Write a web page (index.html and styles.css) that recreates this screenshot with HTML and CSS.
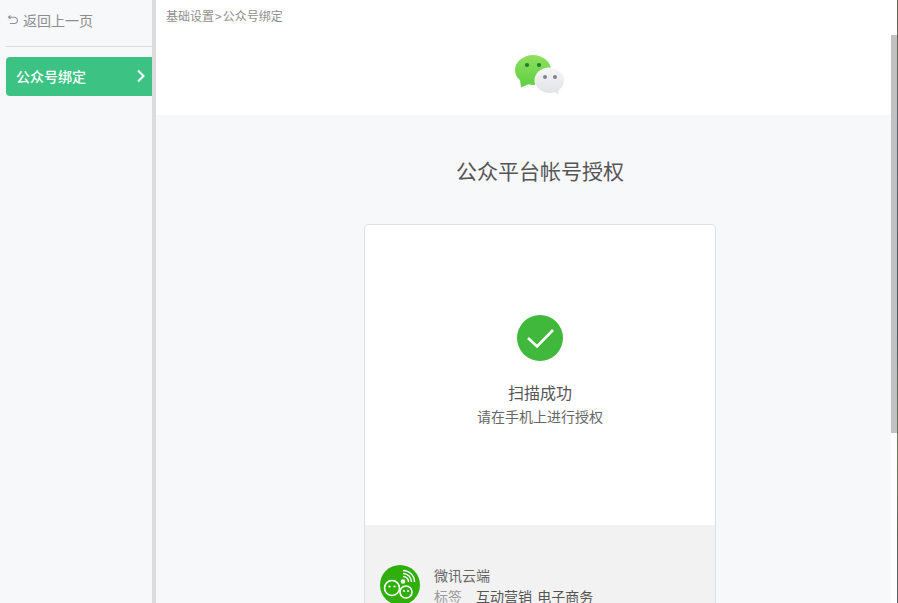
FILE: index.html
```html
<!DOCTYPE html>
<html lang="zh-CN">
<head>
<meta charset="utf-8">
<title>公众号绑定</title>
<link rel="stylesheet" href="styles.css">
</head>
<body>
<div class="app">
  <aside class="sidebar">
    <a class="back"><svg class="back-icon" viewBox="0 0 12 12"><path d="M3.500 1.500 1.500 3.200l2 1.700M1.700 3.200h5.600a2.900 2.900 0 0 1 0 6.300H3" fill="none" stroke="#8f8f8f" stroke-width="1.100"/></svg><span>返回上一页</span></a>
    <div class="side-rule"></div>
    <a class="side-item"><span>公众号绑定</span><svg class="chev" viewBox="0 0 10 14"><path d="M2 1.500 7.500 7 2 12.500" fill="none" stroke="#fff" stroke-width="2"/></svg></a>
  </aside>
  <main class="main">
    <header class="top">
      <div class="crumb">基础设置<span class="sep">&gt;</span>公众号绑定</div>
      <div class="logo-row">
        <svg class="logo" width="52" height="42" viewBox="0 0 52 42">
          <defs>
            <linearGradient id="g" x1="0" y1="0" x2="0" y2="1"><stop offset="0" stop-color="#8fe05f"/><stop offset="1" stop-color="#62cf45"/></linearGradient>
            <linearGradient id="w" x1="0" y1="0" x2="0" y2="1"><stop offset="0" stop-color="#f6f6f8"/><stop offset="1" stop-color="#e2e3e8"/></linearGradient>
          </defs>
          <ellipse cx="19" cy="15" rx="18" ry="15" fill="url(#g)"/>
          <path d="M6 25l1 7.500 8-3.500z" fill="#66d048"/>
          <circle cx="13" cy="10" r="2.100" fill="#1f7f2a"/><circle cx="25" cy="10" r="2.100" fill="#1f7f2a"/>
          <ellipse cx="35.500" cy="25.500" rx="15" ry="13" fill="#fff"/>
          <ellipse cx="35.500" cy="25.500" rx="14.500" ry="12.500" fill="url(#w)"/>
          <path d="M39 36l5.500 3.500 0-7z" fill="#e4e5ea"/>
          <circle cx="31" cy="22" r="2" fill="#80838a"/><circle cx="41" cy="22" r="2" fill="#80838a"/>
        </svg>
      </div>
    </header>
    <section class="content">
      <h1 class="title">公众平台帐号授权</h1>
      <div class="card">
        <div class="card-body">
          <svg class="ok" width="46" height="46" viewBox="0 0 46 46"><circle cx="23" cy="23" r="23" fill="#3fb83b"/><path d="M11 23 20 31.500 36 15" fill="none" stroke="#fff" stroke-width="2.600"/></svg>
          <div class="ok-title">扫描成功</div>
          <div class="ok-sub">请在手机上进行授权</div>
        </div>
        <div class="card-foot">
          <svg class="avatar" width="40" height="40" viewBox="0 0 40 40">
            <circle cx="20" cy="20" r="20" fill="#2fae0c"/>
            <circle cx="12" cy="23" r="7.500" fill="#2fae0c" stroke="#fff" stroke-width="1.600"/>
            <circle cx="26" cy="27" r="6" fill="#2fae0c" stroke="#fff" stroke-width="1.600"/>
            <circle cx="9.500" cy="21.500" r="1.100" fill="#fff"/><circle cx="14.500" cy="21.500" r="1.100" fill="#fff"/>
            <circle cx="24" cy="26" r="1" fill="#fff"/><circle cx="28" cy="26" r="1" fill="#fff"/>
            <circle cx="23" cy="16.500" r="2.300" fill="#fff"/>
            <path d="M23 11.500a5.500 5.500 0 0 1 5.500 5.500M23 8.500a8.500 8.500 0 0 1 8.500 8.500M23 5.500a11.500 11.500 0 0 1 11.500 11.500" fill="none" stroke="#fff" stroke-width="1.400"/>
          </svg>
          <div class="foot-text">
            <div class="foot-name">微讯云端</div>
            <div class="foot-tags"><span class="tag-label">标签</span><span class="tag-values">互动营销 电子商务</span></div>
          </div>
        </div>
      </div>
    </section>
  </main>
  <div class="scroll-track"><div class="scroll-thumb"></div></div>
  <div class="edge"></div>
</div>
</body>
</html>
```
FILE: styles.css
```css
* { box-sizing: border-box; }
html, body { margin: 0; height: 100%; overflow: hidden; }
body { font-family: "Noto Sans CJK SC", "Liberation Sans", sans-serif; color: #555; background: #fff; }
.app { display: flex; height: 603px; overflow: hidden; }

.sidebar { width: 156px; flex: none; background: #f7f8fa; border-right: 4px solid #dcdcdc; padding-left: 6px; }
.back { display: flex; align-items: center; height: 46px; padding: 0 0 6px 1px; color: #8c8c8c; font-size: 14px; gap: 4px; }
.back-icon { width: 12px; height: 12px; }
.side-rule { height: 1px; background: #dcdcdc; margin-left: -1px; }
.side-item { display: flex; align-items: center; justify-content: space-between; height: 39px; margin-top: 10px; padding: 0 6px 2px 10px; background: #3cc384; border-radius: 4px 0 0 4px; color: #fff; font-size: 14px; font-weight: 500; }
.chev { width: 10px; height: 14px; }

.main { flex: none; width: 735px; display: flex; flex-direction: column; background: #f7f8fa; }
.top { height: 115px; flex: none; background: #fff; }
.crumb { padding: 7px 0 0 10px; font-size: 12px; line-height: 17px; color: #8f8f8f; }
.sep { padding: 0 1px; }
.logo-row { display: flex; justify-content: center; padding: 31px 0 0 33px; }

.content { flex: 1; display: flex; flex-direction: column; align-items: center; padding-left: 33px; }
.title { margin: 40px 0 0; font-size: 21px; line-height: 30px; font-weight: 400; color: #555; }
.card { width: 352px; margin-top: 39px; flex: none; height: 420px; background: #fff; border: 1px solid #e0e0e0; border-radius: 4px; overflow: hidden; }
.card-body { height: 300px; display: flex; flex-direction: column; align-items: center; padding-top: 90px; }
.ok { flex: none; }
.ok-title { margin-top: 20px; font-size: 16px; line-height: 22px; color: #555; }
.ok-sub { margin-top: 3px; font-size: 14px; line-height: 20px; color: #666; }
.card-foot { height: 118px; background: #f2f2f2; display: flex; align-items: flex-start; padding: 40px 0 0 15px; }
.avatar { flex: none; }
.foot-text { margin-left: 14px; font-size: 14px; line-height: 21px; color: #666; }
.foot-tags { display: flex; gap: 14px; color: #555; }
.tag-label { color: #9a9a9a; }
.tag-values { word-spacing: 2px; }

.scroll-track { width: 6px; flex: none; position: relative; background: #fff; }
.scroll-thumb { position: absolute; top: 35px; left: 0; width: 6px; height: 398px; background: #c1c1c1; }
.edge { width: 1px; flex: none; background: linear-gradient(#6b6a4a, #59606a 20%, #4a5560 55%, #6b7a4a 75%, #59606a); }
```
